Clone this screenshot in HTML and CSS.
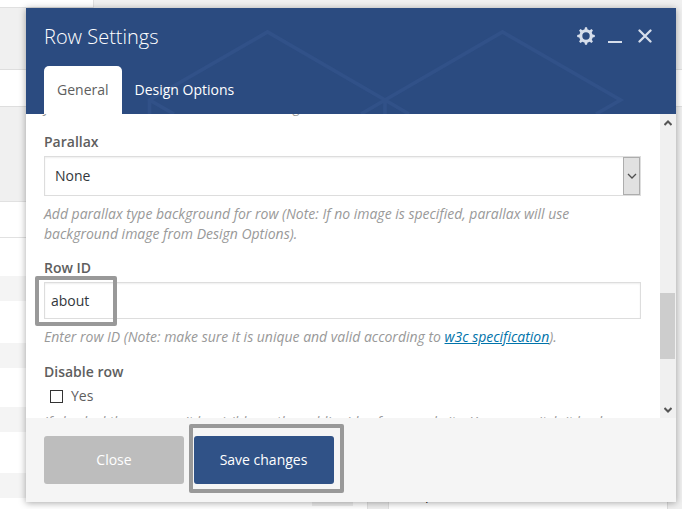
FILE: index.html
```html
<!DOCTYPE html>
<html lang="en">
<head>
<meta charset="utf-8">
<title>Row Settings</title>
<link rel="stylesheet" href="styles.css">
</head>
<body>
<div class="page" aria-hidden="true">
  <div class="page-top"></div>
  <div class="page-gray"></div>
  <div class="page-bar"></div>
  <div class="page-gray tall"></div>
  <div class="page-row"></div>
  <div class="page-main">
    <div class="stripes"><i></i><i></i><i></i><i></i></div>
    <div class="gutter"></div>
    <div class="side">p</div>
    <div class="edge"></div>
  </div>
</div>
<section class="panel">
  <header class="head">
    <svg class="pattern" width="650" height="106" viewBox="26 8 650 106"><g fill="none" stroke="#315188" stroke-width="3.700"><path d="M149.500 114V100L267.500 32L385 100V114M149.500 100L174 114M361 114L385 100L502.500 32L620.500 100L596 114M385 100L409 114"/></g></svg>
    <div class="title-row">
      <h1>Row Settings</h1>
      <div class="controls">
        <svg width="18" height="18" viewBox="0 0 18 18"><g fill="#d6deeb"><path fill-rule="evenodd" d="M9 2.200a6.800 6.800 0 1 0 0 13.600a6.800 6.800 0 1 0 0-13.600M9 5.300a3.700 3.700 0 1 1 0 7.400a3.700 3.700 0 1 1 0-7.400"/><path id="tooth" d="M7.300 3.200L8 .2h2l.7 3zM7.300 14.800l.7 3h2l.7-3zM3.200 7.300L.2 8v2l3 .7zM14.800 7.300l3 .7v2l-3 .7z"/><use href="#tooth" transform="rotate(45 9 9)"/></g></svg>
        <svg width="14" height="18" viewBox="0 0 14 18"><path fill="#d6deeb" d="M0 14h14v2H0z"/></svg>
        <svg width="14" height="18" viewBox="0 0 14 18"><path d="M1.500 3.500L12.500 14.500M12.500 3.500L1.500 14.500" stroke="#d6deeb" stroke-width="2.300" stroke-linecap="round"/></svg>
      </div>
    </div>
    <nav class="tabs"><a class="tab active">General</a><a class="tab">Design Options</a></nav>
  </header>
  <div class="body">
    <div class="content">
      <p class="hint first">your videos will be used as this row background.</p>
      <label class="label">Parallax</label>
      <div class="select"><span>None</span><span class="drop"><svg width="10" height="6" viewBox="0 0 10 6"><path d="M1 1l4 4 4-4" fill="none" stroke="#505050" stroke-width="1.300"/></svg></span></div>
      <p class="hint">Add parallax type background for row (Note: If no image is specified, parallax will use<br>background image from Design Options).</p>
      <label class="label">Row ID</label>
      <div class="input">about<span class="mark mark-id"></span></div>
      <p class="hint">Enter row ID (Note: make sure it is unique and valid according to <a>w3c specification</a>).</p>
      <label class="label disable">Disable row</label>
      <div class="check"><i></i>Yes</div>
      <p class="hint last">If checked the row won't be visible on the public side of your website. You can switch it back</p>
    </div>
    <div class="scroll">
      <svg width="8" height="6" viewBox="0 0 8 6"><path d="M.5 5L4 1.500L7.500 5" fill="none" stroke="#555" stroke-width="2"/></svg>
      <span class="thumb"></span>
      <svg class="down" width="8" height="6" viewBox="0 0 8 6"><path d="M.5 1L4 4.500L7.500 1" fill="none" stroke="#555" stroke-width="2"/></svg>
    </div>
  </div>
  <footer class="foot">
    <span class="btn">Close</span>
    <span class="btn save">Save changes<span class="mark mark-save"></span></span>
  </footer>
</section>
</body>
</html>
```
FILE: styles.css
```css
* { box-sizing: border-box; }
body {
  margin: 0;
  width: 682px;
  height: 509px;
  overflow: hidden;
  position: relative;
  background: #f0f0f0;
  font: 14px/20px "Open Sans", sans-serif;
  color: #5e5e5e;
}
.page { display: flex; flex-direction: column; height: 509px; }
.page-top { width: 94px; height: 8px; background: #fff; border: solid #e0e0e0; border-width: 0 1px 1px 0; }
.page-gray { height: 61px; }
.page-bar { height: 38px; background: #fff; border: solid #dedede; border-width: 1px 0; }
.page-gray.tall { height: 94px; }
.page-row { height: 37px; width: 667px; background: #fff; border: solid #e1e1e1; border-width: 1px 0; }
.page-main { flex: 1; display: flex; background: #fff; }
.stripes { width: 367px; padding-top: 38px; }
.stripes i { display: block; height: 25px; margin-bottom: 41px; background: #f4f4f4; }
.stripes i:nth-child(2) { margin-bottom: 39px; }
.stripes i:first-child { margin-bottom: 42px; }
.stripes i:last-child { margin: 0; }
.stripes::after { content: ""; display: block; width: 41px; height: 8px; margin: 0 0 0 312px; background: #eee; }
.gutter { width: 22px; background: #eee; border: solid #e0e0e0; border-width: 0 1px; }
.side { width: 278px; padding: 246px 0 0 36px; color: #222; }
.edge { flex: 1; background: #f0f0f0; border-left: 1px solid #ddd; }

.panel {
  position: absolute;
  left: 26px;
  top: 8px;
  width: 650px;
  height: 494px;
  display: flex;
  flex-direction: column;
  background: #fff;
  box-shadow: 0 1px 7px rgba(0, 0, 0, .35);
}
.head { position: relative; height: 106px; padding: 0 24px 0 18px; background: #2b4b80; color: #fff; }
.pattern { position: absolute; left: 0; top: 0; }
.title-row { position: relative; display: flex; justify-content: space-between; height: 58px; }
h1 { margin: 15px 0 0; font-size: 20px; line-height: 28px; font-weight: 300; }
.controls { display: flex; gap: 15px; padding-top: 19px; }
.controls svg:nth-child(2) { margin-left: -2px; }
.controls svg:nth-child(3) { margin-left: 1px; }
.tabs { position: relative; display: flex; }
.tab { height: 48px; padding: 0 13px; line-height: 48px; }
.tab.active { width: 78px; background: #fff; color: #5e5e5e; border-radius: 5px 5px 0 0; }
.tab:last-child { padding-left: 12.5px; }

.body { display: flex; height: 304px; overflow: hidden; }
.content { width: 634px; padding: 0 19px 0 18px; }
.hint { margin: 8px 0 14px; color: #999; font-style: italic; white-space: nowrap; letter-spacing: -.01px; }
.hint.first { margin: -17px 0 15px; }
.hint.last { margin: 6px 0 0; }
.hint a { color: #0073aa; text-decoration: underline; }
.label { display: block; height: 20px; margin-bottom: 4px; font-weight: 600; }
.disable { margin-top: 15px; }
.select, .input { position: relative; display: flex; align-items: center; width: 597px; border: 1px solid #ddd; box-shadow: inset 0 1px 2px rgba(0, 0, 0, .07); color: #32373c; }
.select { height: 40px; padding-left: 10px; justify-content: space-between; }
.drop { display: flex; align-items: center; justify-content: center; width: 17px; height: 38px; background: #e1e1e1; border: 1px solid #adadad; }
.input { height: 37px; padding-left: 6px; }
.mark { position: absolute; border: 4px solid #999; border-radius: 2px; }
.mark-id { left: -10px; top: -7px; width: 82px; height: 50px; }
.check { display: flex; align-items: center; gap: 8px; height: 20px; padding-left: 6px; }
.check i { width: 13px; height: 13px; border: 1px solid #333; background: #fff; }
.scroll { width: 16px; display: flex; flex-direction: column; align-items: center; background: #f0f0f0; padding-top: 6px; }
.thumb { width: 15px; height: 66px; margin: 167px 1px 0 0; background: #cdcdcd; }
.down { margin-top: 48px; }

.foot { height: 84px; display: flex; gap: 10px; padding: 18px; background: #f5f5f5; }
.btn { position: relative; width: 140px; height: 48px; line-height: 48px; text-align: center; border-radius: 3px; background: #bdbdbd; color: #fff; }
.save { background: #305287; padding-right: 1px; }
.mark-save { left: -5px; top: -12px; width: 155px; height: 69px; }
```
